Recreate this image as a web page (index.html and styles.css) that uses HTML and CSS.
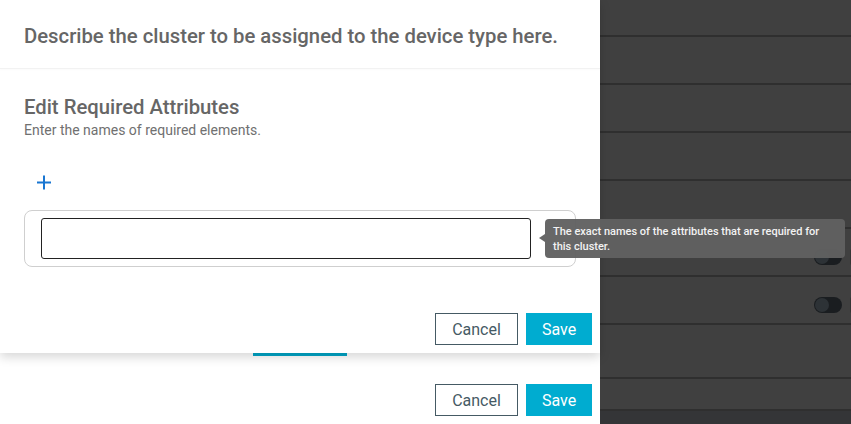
FILE: index.html
```html
<!DOCTYPE html>
<html>
<head>
<meta charset="utf-8">
<link rel="stylesheet" href="styles.css">
</head>
<body>
<div class="page">
  <div class="drawer">
    <div class="popup">
      <div class="popup-header">Describe the cluster to be assigned to the device type here.</div>
      <div class="popup-body">
        <h2 class="title">Edit Required Attributes</h2>
        <p class="subtitle">Enter the names of required elements.</p>
        <button class="add-btn" aria-label="Add">
          <svg width="14" height="15" viewBox="0 0 14 15"><path d="M7 0.5V14.5M0 7.5H14" stroke="#1976d2" stroke-width="2" fill="none"/></svg>
        </button>
        <div class="attr-box">
          <input class="attr-input" type="text">
        </div>
        <div class="tooltip">The exact names of the attributes that are required for this cluster.</div>
      </div>
      <div class="actions">
        <button class="btn btn-cancel">Cancel</button>
        <button class="btn btn-save">Save</button>
      </div>
    </div>
    <div class="tab-indicator"></div>
    <div class="actions actions-bottom">
      <button class="btn btn-cancel">Cancel</button>
      <button class="btn btn-save">Save</button>
    </div>
  </div>
  <div class="backdrop">
    <div class="row row-first"></div>
    <div class="row"></div>
    <div class="row"></div>
    <div class="row"></div>
    <div class="row"></div>
    <div class="row row-toggle"><span class="toggle"><span class="knob"></span></span><span class="edge"></span></div>
    <div class="row row-toggle"><span class="toggle"><span class="knob"></span></span><span class="edge"></span></div>
    <div class="row row-tall"></div>
    <div class="row row-short"></div>
    <div class="rest"></div>
  </div>
</div>
</body>
</html>
```
FILE: styles.css
```css
* { box-sizing: border-box; }
html, body { margin: 0; padding: 0; }
body {
  font-family: Roboto, "Noto Sans", Arial, sans-serif;
  background: #ffffff;
  width: 851px;
  height: 424px;
  overflow: hidden;
}
.page {
  display: flex;
  height: 424px;
}
.drawer {
  width: 600px;
  flex: none;
  background: #fff;
  position: relative;
  z-index: 2;
}
.popup {
  position: relative;
  height: 353px;
  background: #fff;
  box-shadow: 0 4px 10px rgba(0,0,0,0.16);
  z-index: 2;
}
.popup-header {
  height: 69px;
  padding: 24px 24px 0;
  font-size: 20.3px;
  line-height: 24px;
  font-weight: 500;
  color: #666;
  border-bottom: 1px solid #f2f2f2;
  box-shadow: 0 1px 2px rgba(0,0,0,0.02);
}
.popup-body {
  padding: 26px 24px 0;
}
.title {
  margin: 0;
  font-size: 20.3px;
  line-height: 24px;
  font-weight: 500;
  color: #666;
}
.subtitle {
  margin: 1px 0 0;
  font-size: 14px;
  line-height: 20px;
  color: #707070;
}
.add-btn {
  display: flex;
  align-items: center;
  justify-content: center;
  width: 24px;
  height: 24px;
  margin: 30px 0 0 8px;
  padding: 0;
  border: none;
  background: none;
}
.attr-box {
  margin-top: 16px;
  width: 552px;
  height: 57px;
  border: 1px solid #cfcfcf;
  border-radius: 8px;
  padding: 7px 44px 0 16px;
}
.attr-input {
  display: block;
  width: 490px;
  height: 41px;
  border: 1px solid #222;
  border-radius: 3px;
  background: #fff;
  outline: none;
}
.tooltip {
  position: absolute;
  left: 545px;
  top: 219px;
  width: 300px;
  height: 39px;
  padding: 5px 8px 0;
  background: rgba(97,97,97,0.96);
  border-radius: 4px;
  color: #f2f2f2;
  font-size: 11px;
  line-height: 15px;
  font-weight: 500;
  z-index: 5;
}
.tooltip::before {
  content: "";
  position: absolute;
  left: -6px;
  top: 15px;
  border-style: solid;
  border-width: 4px 6px 4px 0;
  border-color: transparent rgba(97,97,97,0.96) transparent transparent;
}
.actions {
  display: flex;
  justify-content: flex-end;
  gap: 8px;
  padding-right: 8px;
  margin-top: 46px;
}
.btn {
  height: 32px;
  font-family: Roboto, Arial, sans-serif;
  font-size: 16px;
  padding: 0;
  cursor: pointer;
}
.btn-cancel {
  width: 83px;
  background: #fff;
  border: 1px solid #455a64;
  color: #455a64;
}
.btn-save {
  width: 66px;
  background: #00acd0;
  border: none;
  color: #fff;
}
.tab-indicator {
  margin-left: 253px;
  width: 94px;
  height: 3px;
  background: #00a6c7;
}
.actions-bottom {
  margin-top: 28px;
}
.backdrop {
  flex: 1;
  background: #404040;
  display: flex;
  flex-direction: column;
}
.row {
  height: 48px;
  border-bottom: 2px solid #2f2f2f;
  flex: none;
}
.row-first { height: 37px; }
.row-tall { height: 54px; }
.row-short { height: 32px; }
.row-toggle {
  display: flex;
  align-items: flex-start;
  padding: 20px 0 0 214px;
  gap: 8px;
}
.toggle {
  width: 28px;
  height: 16px;
  border-radius: 8px;
  background: #1a1d20;
  position: relative;
  display: block;
}
.knob {
  position: absolute;
  left: 1px;
  top: 1px;
  width: 14px;
  height: 14px;
  border-radius: 50%;
  background: #2d3236;
}
.edge {
  width: 6px;
  height: 16px;
  background: #353535;
  border-radius: 2px;
}
.rest {
  flex: 1;
  background: #343537;
}
```
